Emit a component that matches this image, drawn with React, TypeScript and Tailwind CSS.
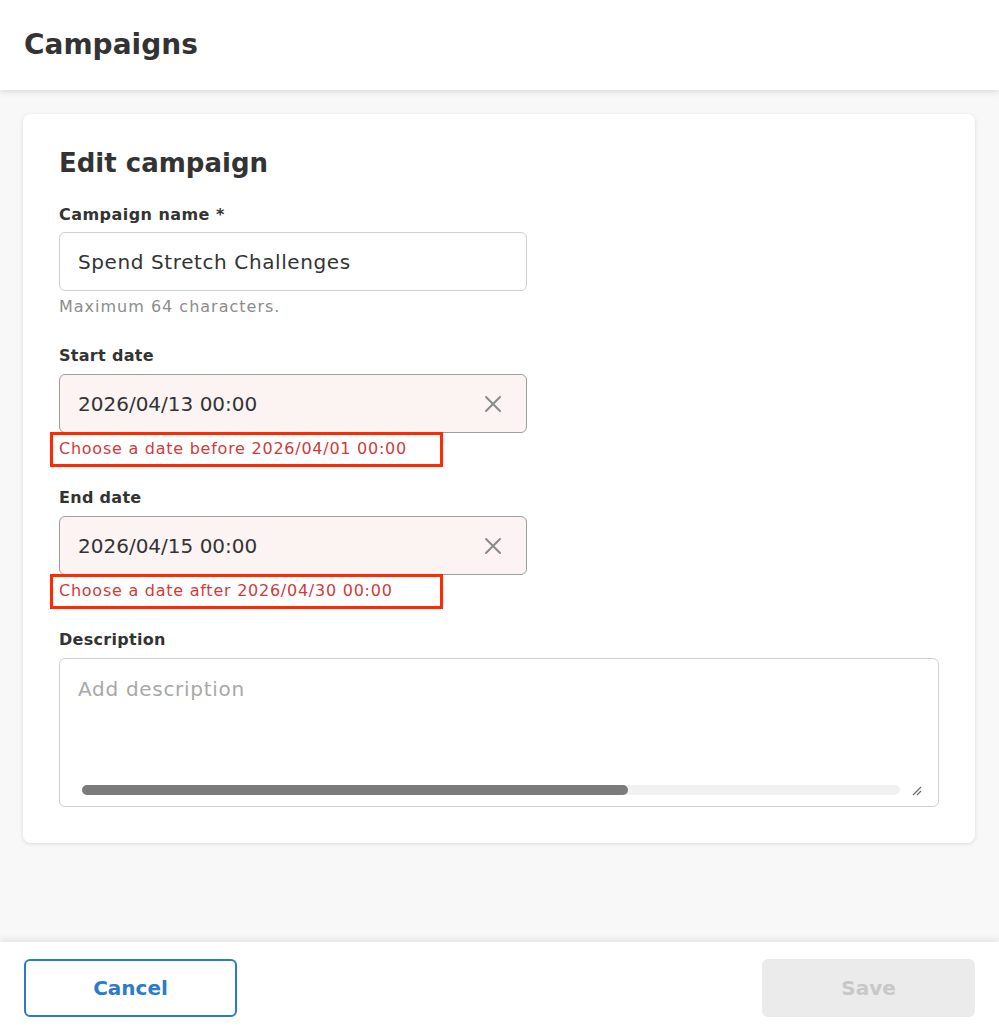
import React from "react";

const font = { fontFamily: '"DejaVu Sans", "Noto Sans", sans-serif' };

const ClearIcon = () => (
  <svg width="18" height="18" viewBox="0 0 18 18" fill="none">
    <path d="M2 2L16 16M16 2L2 16" stroke="#8a8a8a" strokeWidth="2" strokeLinecap="round" />
  </svg>
);

type DateFieldProps = {
  label: string;
  value: string;
  error: string;
};

const DateField = ({ label, value, error }: DateFieldProps) => {
  return (
    <div className="mb-[27px]">
      <div className="h-6 mb-1.5 text-[16px] leading-6 font-semibold tracking-[0.3px] text-[#333]">{label}</div>
      <div className="w-[468px] h-[59px] rounded-md border border-[#9e9e9e] bg-[#fcf3f3] flex items-center justify-between pl-[18px] pr-[24px]">
        <span className="text-[20px] text-[#333]">{value}</span>
        <ClearIcon />
      </div>
      <div className="relative mt-1.5 h-5 text-[16px] leading-5 tracking-[0.75px] text-[#d23a3a]">
        {error}
        <div className="absolute -left-[9px] -top-[7px] w-[393px] h-[35px] border-[3px] border-[#ff2a00]" />
      </div>
    </div>
  );
};

const App = () => {
  return (
    <div className="h-screen flex flex-col bg-[#f8f8f8]" style={font}>
      <header className="h-[90px] shrink-0 bg-white flex items-center px-6 shadow-[0_2px_6px_rgba(0,0,0,0.12)] relative z-10">
        <h1 className="text-[28px] font-bold text-[#333]">Campaigns</h1>
      </header>

      <main className="flex-1 pt-6 px-[23px]">
        <div className="w-[952px] bg-white rounded-lg shadow-[0_1px_4px_rgba(0,0,0,0.12)] pt-[33px] pb-9 px-9">
          <h2 className="text-[26px] leading-8 font-bold text-[#333] mb-6">Edit campaign</h2>

          <div className="mb-[27px]">
            <div className="h-6 mb-[5px] text-[16px] leading-6 font-semibold tracking-[0.45px] text-[#333]">Campaign name *</div>
            <div className="w-[468px] h-[59px] rounded-md border border-[#cfcfcf] bg-white flex items-center pl-[18px]">
              <span className="text-[20px] tracking-[0.6px] text-[#333]">Spend Stretch Challenges</span>
            </div>
            <div className="mt-1.5 h-5 text-[16px] leading-5 tracking-[1px] text-[#8c8c8c]">Maximum 64 characters.</div>
          </div>

          <DateField label="Start date" value="2026/04/13 00:00" error="Choose a date before 2026/04/01 00:00" />
          <DateField label="End date" value="2026/04/15 00:00" error="Choose a date after 2026/04/30 00:00" />

          <div>
            <div className="h-6 mb-1.5 text-[16px] leading-6 font-semibold tracking-[0.3px] text-[#333]">Description</div>
            <div className="w-[880px] h-[149px] rounded-md border border-[#cfcfcf] bg-white flex flex-col pl-[18px] pt-[16px] pb-[10px]">
              <div className="text-[20px] leading-7 tracking-[0.7px] text-[#a8a8a8]">Add description</div>
              <div className="mt-auto flex items-center pl-1 pr-[16px] gap-[10px]">
                <div className="flex-1 h-[10px] rounded-full bg-[#f1f1f1]">
                  <div className="w-[546px] h-full rounded-full bg-[#7b7b7b]" />
                </div>
                <svg width="12" height="12" viewBox="0 0 12 12">
                  <path d="M11 3L3 11M11 7L7 11" stroke="#6b6b6b" strokeWidth="1.2" />
                </svg>
              </div>
            </div>
          </div>
        </div>
      </main>

      <footer className="h-[88px] shrink-0 bg-white flex items-start justify-between px-6 pt-[17px] shadow-[0_-3px_6px_rgba(0,0,0,0.08)] relative z-10">
        <button className="w-[213px] h-[58px] rounded-md border-2 border-[#2a7bcb] text-[#2a7bcb] text-[20px] font-bold bg-white">
          Cancel
        </button>
        <button className="w-[213px] h-[58px] rounded-md bg-[#ebebeb] text-[#c8c8c8] text-[20px] font-bold">
          Save
        </button>
      </footer>
    </div>
  );
};

export default App;
